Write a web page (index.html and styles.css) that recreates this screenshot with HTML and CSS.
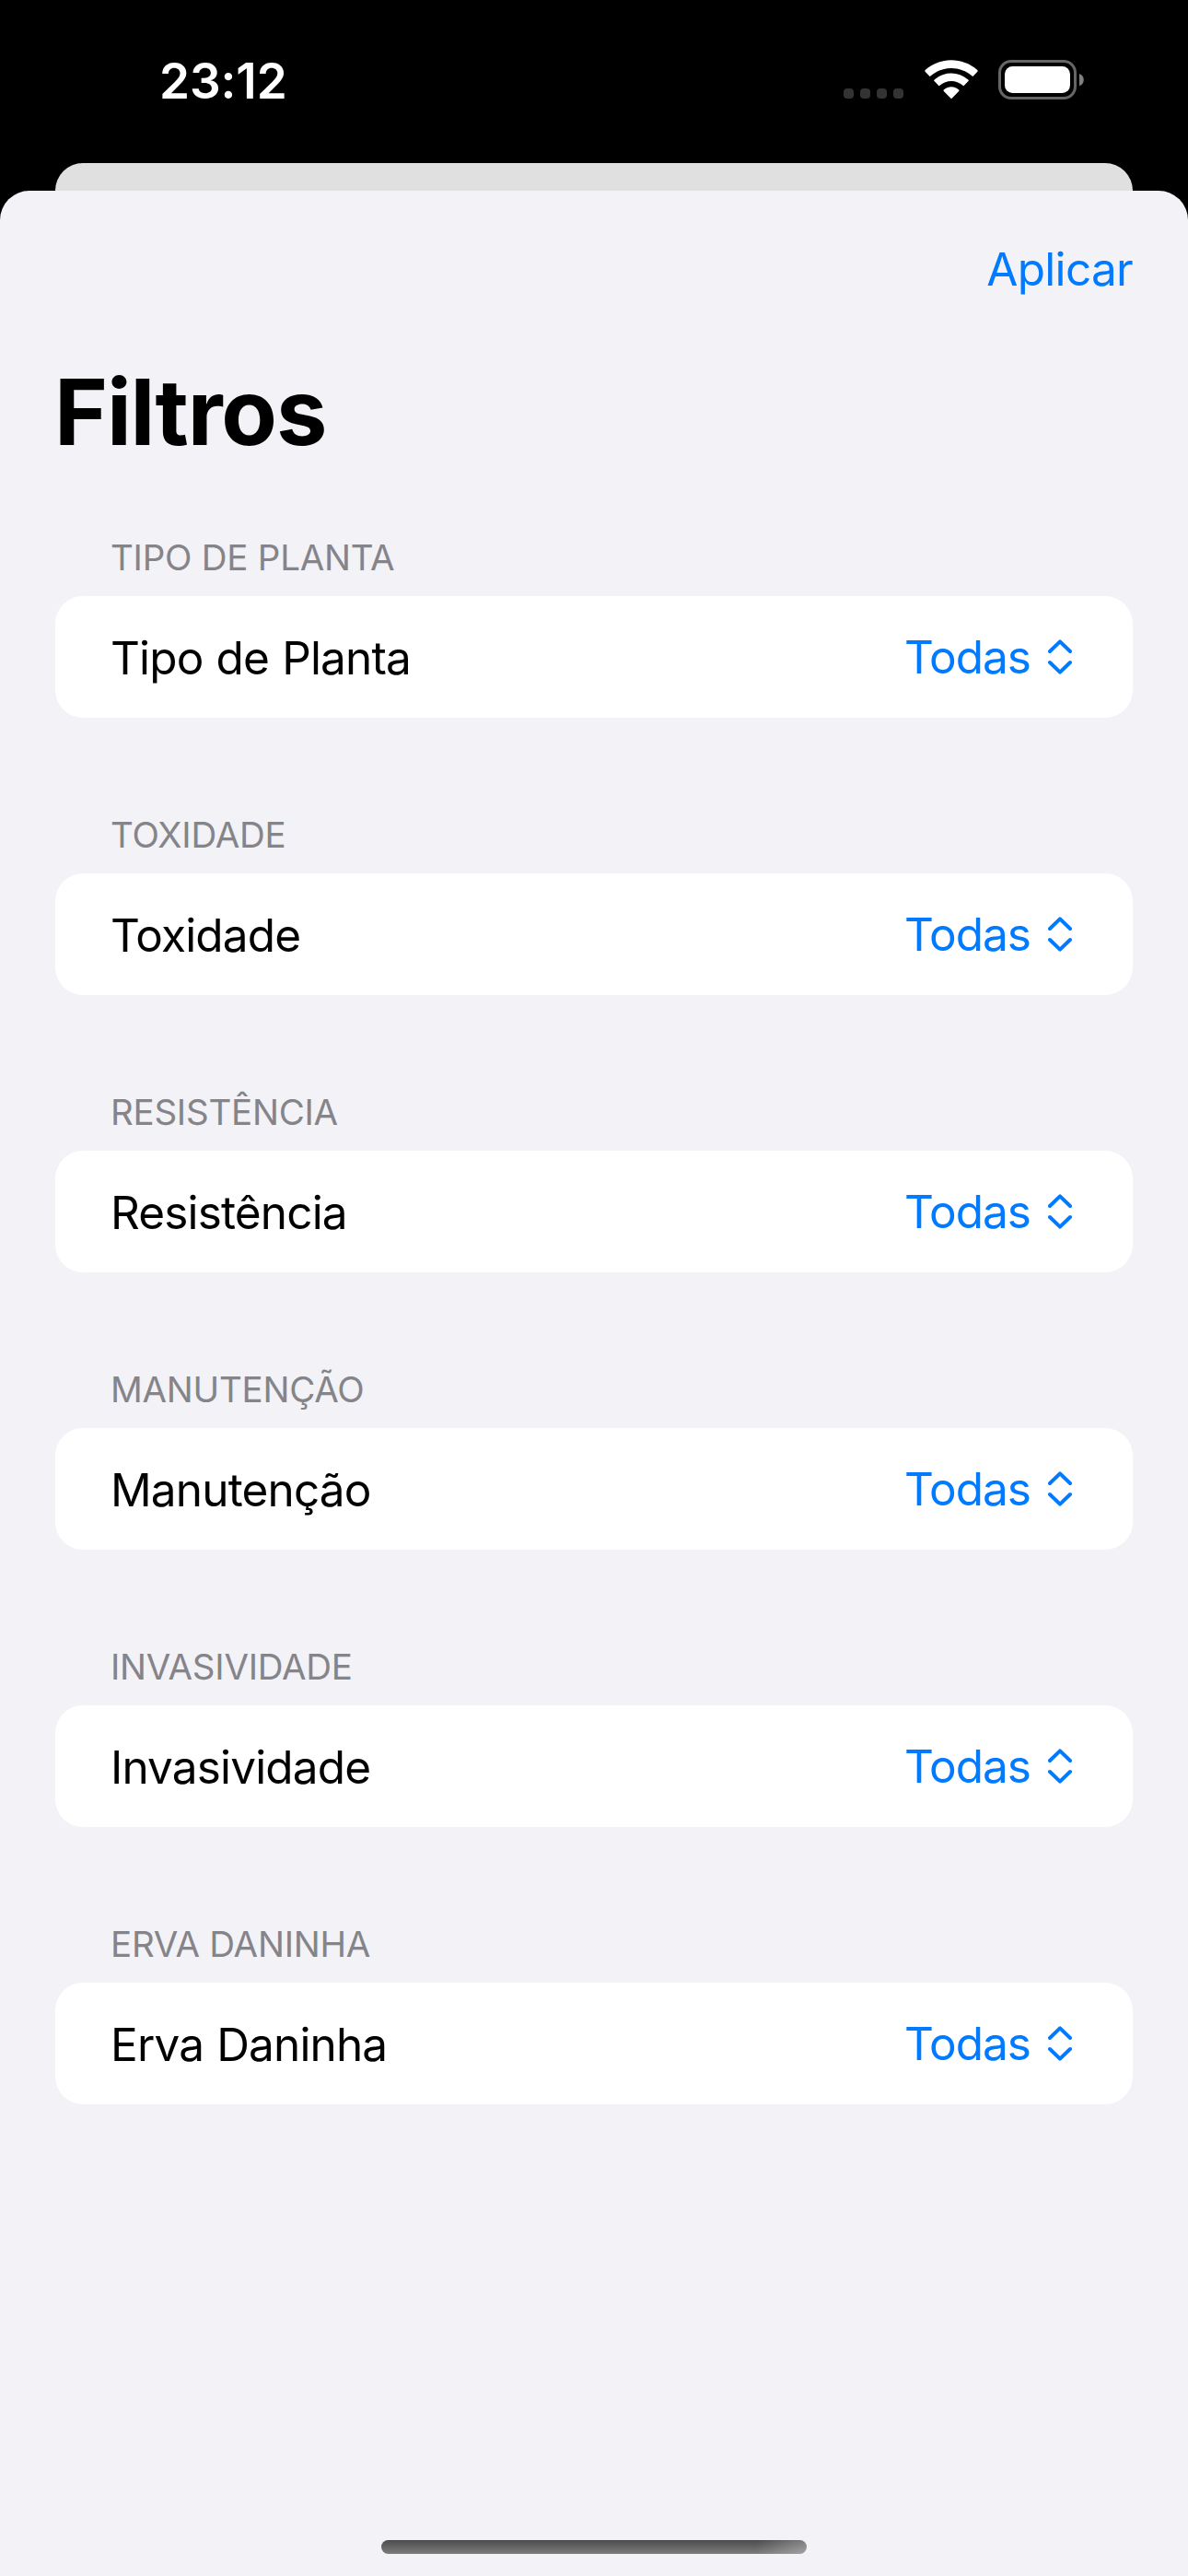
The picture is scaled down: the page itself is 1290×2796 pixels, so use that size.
FILE: index.html
```html
<!DOCTYPE html>
<html lang="pt-BR">
<head>
<meta charset="utf-8">
<title>Filtros</title>
<link rel="stylesheet" href="styles.css">
</head>
<body>
<svg class="symbols" aria-hidden="true">
  <symbol id="updown" viewBox="0 0 26 38"><path d="M2 13 13 2.4 24 13M2 25 13 35.6 24 25" fill="none" stroke="currentColor" stroke-width="4" stroke-linecap="round" stroke-linejoin="round"/></symbol>
</svg>
<div class="screen">
  <header class="status">
    <time class="clock">23:12</time>
    <div class="indicators">
      <div class="cellular"><i></i><i></i><i></i><i></i></div>
      <svg class="wifi" viewBox="0 0 58 43">
        <path d="M.8 12.9Q-.3 11.800 1 10.700C17-3.300 41-3.300 57 10.700Q58.300 11.800 57.200 12.900L52.600 17.700Q52.200 18.100 51.600 17.600C38.500 6.200 19.500 6.200 6.400 17.600Q5.800 18.100 5.400 17.700Z"/>
        <path d="M10.500 23.100Q9.700 22.300 10.700 21.500C21.500 12.300 36.500 12.300 47.300 21.500Q48.300 22.300 47.500 23.100L42.700 27.900Q42.300 28.400 41.600 27.800C34 21.400 24 21.400 16.400 27.800Q15.700 28.400 15.300 27.900Z"/>
        <path d="M20.800 33.900Q19.900 33 21 32.200C26 28.300 32 28.300 37 32.200Q38.100 33 37.200 33.900L29 42.200Z"/>
      </svg>
      <svg class="battery" viewBox="0 0 94 43">
        <rect x="1.500" y="1.500" width="82" height="40" rx="12.500" fill="none" stroke="#666" stroke-width="3"/>
        <rect x="7" y="7" width="71" height="29" rx="8.500" fill="#fff"/>
        <path d="M88 15C94.400 17.300 94.400 26 88 28.300Z" fill="#808080"/>
      </svg>
    </div>
  </header>
  <div class="backdrop"></div>
  <main class="sheet">
    <nav class="toolbar"><span class="apply">Aplicar</span></nav>
    <h1 class="title">Filtros</h1>
    <section class="group">
      <h2 class="heading">TIPO DE PLANTA</h2>
      <div class="row"><span class="label">Tipo de Planta</span><span class="value">Todas</span><svg class="chevrons"><use href="#updown"/></svg></div>
    </section>
    <section class="group">
      <h2 class="heading">TOXIDADE</h2>
      <div class="row"><span class="label">Toxidade</span><span class="value">Todas</span><svg class="chevrons"><use href="#updown"/></svg></div>
    </section>
    <section class="group">
      <h2 class="heading">RESISTÊNCIA</h2>
      <div class="row"><span class="label">Resistência</span><span class="value">Todas</span><svg class="chevrons"><use href="#updown"/></svg></div>
    </section>
    <section class="group">
      <h2 class="heading">MANUTENÇÃO</h2>
      <div class="row"><span class="label">Manutenção</span><span class="value">Todas</span><svg class="chevrons"><use href="#updown"/></svg></div>
    </section>
    <section class="group">
      <h2 class="heading">INVASIVIDADE</h2>
      <div class="row"><span class="label">Invasividade</span><span class="value">Todas</span><svg class="chevrons"><use href="#updown"/></svg></div>
    </section>
    <section class="group">
      <h2 class="heading">ERVA DANINHA</h2>
      <div class="row"><span class="label">Erva Daninha</span><span class="value">Todas</span><svg class="chevrons"><use href="#updown"/></svg></div>
    </section>
    <div class="home"></div>
  </main>
</div>
</body>
</html>
```
FILE: styles.css
```css
* { box-sizing: border-box; }
body { margin: 0; background: #000; font-family: Inter, "Liberation Sans", sans-serif; }
.symbols { display: none; }
.screen { width: 1290px; height: 2796px; display: flex; flex-direction: column; overflow: hidden; }
.status { height: 177px; padding: 0 112px 0 173px; display: flex; justify-content: space-between; }
.clock { margin-top: 56px; font-size: 53px; line-height: 64px; font-weight: 600; color: #fff; letter-spacing: -0.1px; }
.indicators { margin-top: 65px; height: 43px; display: flex; }
.cellular { display: flex; gap: 7px; padding-top: 31px; margin-right: 23px; }
.cellular i { width: 11px; height: 11px; border-radius: 4px; background: #333; }
.wifi { width: 58px; height: 43px; fill: #fff; margin-right: 22px; }
.battery { width: 94px; height: 43px; }
.backdrop { height: 30px; margin: 0 60px; background: #e0e0e0; border-radius: 30px 30px 0 0; }
.sheet { flex: 1; display: flex; flex-direction: column; background: #f2f2f7; border-radius: 32px 32px 0 0; padding: 0 60px 24px; }
.toolbar { height: 168px; padding-top: 55px; display: flex; justify-content: flex-end; }
.apply { font-size: 49.5px; line-height: 60px; letter-spacing: -0.7px; color: #007aff; }
.title { margin: 12px 0 0 -1px; height: 120px; font-size: 99px; line-height: 120px; font-weight: 700; letter-spacing: -1.2px; }
.group { height: 301px; padding-top: 74px; }
.heading { margin: 0; padding: 0 60px; height: 66px; font-size: 38.5px; line-height: 48px; font-weight: 400; color: #858489; letter-spacing: -0.25px; }
.row { height: 132px; padding: 0 66px 0 60px; display: flex; align-items: center; border-radius: 30px; background: #fff; font-size: 49.5px; line-height: 60px; }
.label { flex: 1; padding-top: 2px; letter-spacing: -0.85px; word-spacing: 1px; }
.value { color: #007aff; letter-spacing: -1px; }
.chevrons { width: 26px; height: 38px; margin-left: 19px; color: #007aff; }
.home { width: 462px; height: 15px; margin: auto auto 0; border-radius: 8px; background: linear-gradient(100deg, transparent 88%, rgb(255 255 255 / 30%)), linear-gradient(#4b4b4b, #7c7c7c); }
```
